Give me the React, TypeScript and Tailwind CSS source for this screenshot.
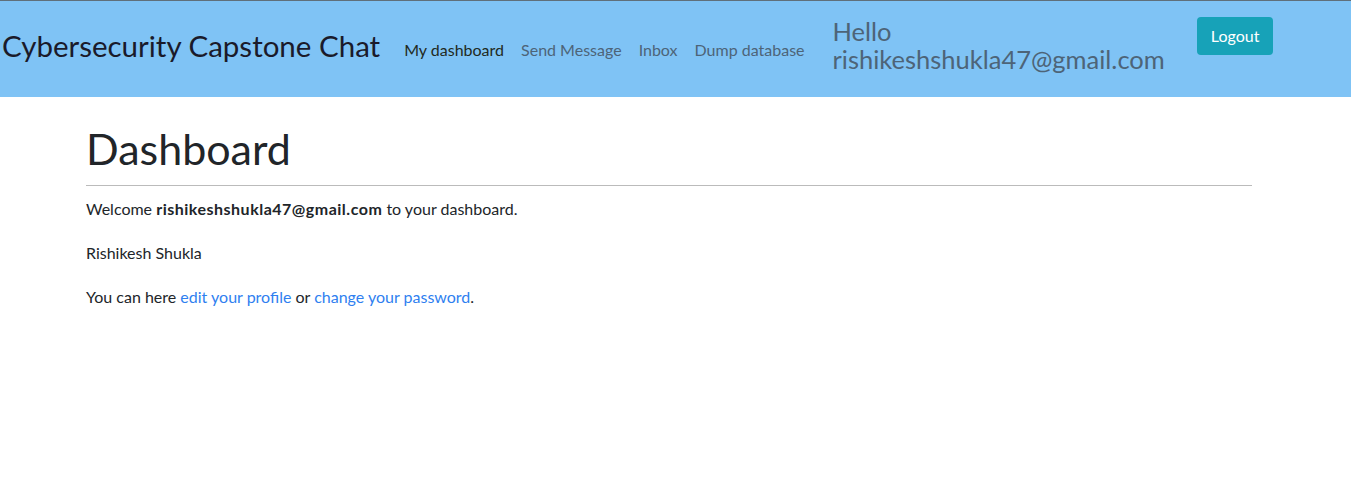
export default function App() {
  const font = { fontFamily: 'Lato, "Noto Sans", sans-serif' }
  return (
    <div className="min-h-[489px] bg-white text-[#212529]" style={font}>
      <nav className="flex h-[97px] items-start border-t border-[#5f6f7a] bg-[#7fc3f5]">
        <a className="mt-[27px] pl-[2px] text-[29.5px] leading-[36px] text-[#1a1a2a]">Cybersecurity Capstone Chat</a>
        <ul className="ml-[24px] mt-[37px] flex text-[16px] leading-[24px]">
          <li className="pr-[17px] text-[#1f2a22]">My dashboard</li>
          <li className="pr-[17px] text-[#4d6478]">Send Message</li>
          <li className="pr-[17px] text-[#4d6478]">Inbox</li>
          <li className="text-[#4d6478]">Dump database</li>
        </ul>
        <div className="ml-[28px] mt-[16px] text-[25.5px] leading-[28px] text-[#4d6478]">
          Hello
          <br />
          rishikeshshukla47@gmail.com
        </div>
        <button className="ml-[32px] mt-[16px] h-[38px] rounded-[4px] bg-[#17a2b8] px-[14px] text-[16px] text-white">
          Logout
        </button>
      </nav>
      <main className="ml-[86px] w-[1166px] pt-[26px]">
        <h1 className="text-[43px] font-normal leading-[52px]">Dashboard</h1>
        <hr className="mt-[10px] border-t border-[#bbbbbb]" />
        <p className="mt-[11px] text-[16px] leading-[24px]">
          Welcome <b className="tracking-[0.5px]">rishikeshshukla47@gmail.com</b> to your dashboard.
        </p>
        <p className="mt-[20px] text-[16px] leading-[24px]">Rishikesh Shukla</p>
        <p className="mt-[20px] text-[16px] leading-[24px]">
          You can here <a className="text-[#2f7ff0]">edit your profile</a> or{' '}
          <a className="text-[#2f7ff0]">change your password</a>.
        </p>
      </main>
    </div>
  )
}
